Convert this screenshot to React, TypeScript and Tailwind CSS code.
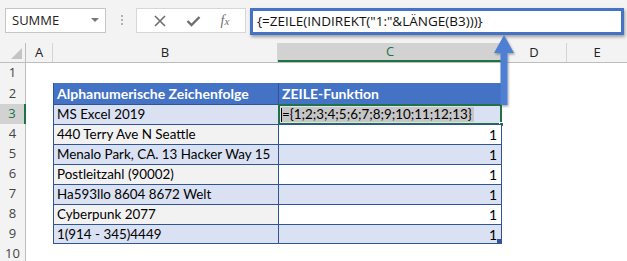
import React from "react";

const rows = [
  { b: "MS Excel 2019", c: "", odd: true },
  { b: "440 Terry Ave N Seattle", c: "1", odd: false },
  { b: "Menalo Park, CA. 13 Hacker Way 15", c: "1", odd: true },
  { b: "Postleitzahl (90002)", c: "1", odd: false },
  { b: "Ha593llo 8604 8672 Welt", c: "1", odd: true },
  { b: "Cyberpunk 2077", c: "1", odd: false },
  { b: "1(914 - 345)4449", c: "1", odd: true },
];

const ui = { fontFamily: '"Open Sans", "Noto Sans", sans-serif' };
const cell = { fontFamily: 'Lato, "Liberation Sans", sans-serif' };

function RowHead({ n, active }: { n: number; active?: boolean }) {
  return (
    <div
      className={
        "w-[26px] shrink-0 flex items-center justify-center text-[13px] " +
        (active ? "bg-[#d2d2d2] text-[#217346] border-r-2 border-[#217346]" : "bg-[#f3f3f3] text-[#444] border-r border-[#bdbdbd]")
      }
      style={ui}
    >
      {n}
    </div>
  );
}

export default function App() {
  return (
    <div className="relative w-[627px] h-[261px] overflow-hidden bg-white">
      {/* toolbar */}
      <div className="h-[43px] bg-[#f3f3f3] flex items-start pt-[8px]" style={ui}>
        <div className="ml-[5px] w-[101px] h-[25px] bg-white border border-[#c6c6c6] flex items-center justify-between pl-[6px] pr-[6px]">
          <span className="text-[13px] text-[#222]">SUMME</span>
          <span className="w-0 h-0 border-l-[4px] border-r-[4px] border-t-[4px] border-l-transparent border-r-transparent border-t-[#777] mb-[2px]" />
        </div>
        <div className="ml-[15px] mt-[7px] flex flex-col gap-[2px]">
          <span className="w-[2px] h-[2px] bg-[#b0b0b0]" />
          <span className="w-[2px] h-[2px] bg-[#b0b0b0]" />
          <span className="w-[2px] h-[2px] bg-[#b0b0b0]" />
        </div>
        <div className="ml-[13px] w-[110px] h-[25px] bg-white border border-[#d6d6d6] flex items-center justify-around px-[6px]">
          <svg width="14" height="14" viewBox="0 0 14 14">
            <path d="M2 2 L12 12 M12 2 L2 12" stroke="#6f6f6f" strokeWidth="1.6" />
          </svg>
          <svg width="15" height="14" viewBox="0 0 15 14">
            <path d="M1.5 7 L5.5 11 L13.5 3" stroke="#6f6f6f" strokeWidth="2.4" fill="none" />
          </svg>
          <span className="text-[14px] italic text-[#6f6f6f] leading-none" style={{ fontFamily: '"Liberation Serif", serif' }}>
            f<span className="text-[11px]">x</span>
          </span>
        </div>
        <div className="ml-[4px] w-[374px] h-[27px] bg-white border-[3px] border-[#4472c4] shadow-[1px_2px_3px_rgba(0,0,0,0.35)] flex items-center pl-[4px]">
          <span className="text-[13.5px] text-[#111] whitespace-nowrap">{'{=ZEILE(INDIREKT("1:"&LÄNGE(B3)))}'}</span>
        </div>
      </div>

      {/* column headers */}
      <div className="h-[20px] flex bg-[#f3f3f3] border-b border-[#bdbdbd] text-[13px] text-[#222]" style={ui}>
        <div className="w-[26px] shrink-0 border-r border-[#bdbdbd] relative">
          <span className="absolute right-[3px] bottom-[3px] w-0 h-0" style={{ borderBottom: "11px solid #c4c4c4", borderLeft: "11px solid transparent" }} />
        </div>
        <div className="w-[27px] shrink-0 border-r border-[#d4d4d4] flex items-center justify-center">A</div>
        <div className="w-[225px] shrink-0 border-r border-[#d4d4d4] flex items-center justify-center">B</div>
        <div className="w-[224px] shrink-0 bg-[#d2d2d2] border-b-2 border-[#217346] text-[#217346] flex items-center justify-center">C</div>
        <div className="w-[65px] shrink-0 border-r border-[#d4d4d4] flex items-center justify-center">D</div>
        <div className="flex-1 flex items-center justify-center">E</div>
      </div>

      {/* row 1 */}
      <div className="h-[20px] flex">
        <RowHead n={1} />
      </div>

      {/* row 2 header */}
      <div className="h-[21px] flex text-[14px]" style={cell}>
        <RowHead n={2} />
        <div className="w-[27px] shrink-0" />
        <div className="w-[225px] shrink-0 bg-[#4472c4] text-white font-bold flex items-center pl-[3px] border-l border-[#2f5597] whitespace-nowrap">
          Alphanumerische Zeichenfolge
        </div>
        <div className="w-[224px] shrink-0 bg-[#4472c4] text-white font-bold flex items-center pl-[3px] border-l border-r border-[#2f5597] whitespace-nowrap">
          ZEILE-Funktion
        </div>
      </div>

      {rows.map((r, i) => (
        <div key={i} className="h-[20px] flex text-[13.4px] text-black" style={cell}>
          <RowHead n={i + 3} active={i === 0} />
          <div className="w-[27px] shrink-0" />
          <div
            className={
              "w-[225px] shrink-0 flex items-center pl-[3px] border-l border-t border-[#2f5597] whitespace-nowrap overflow-hidden " +
              (r.odd ? "bg-[#d9e1f2]" : "bg-[#f2f2f2]") +
              (i === rows.length - 1 ? " border-b" : "")
            }
          >
            {r.b}
          </div>
          <div
            className={
              "relative w-[224px] shrink-0 flex items-center justify-end pr-[4px] text-[14px] border-l border-r border-t border-[#2f5597] " +
              (r.odd ? "bg-[#d9e1f2]" : "bg-white") +
              (i === rows.length - 1 ? " border-b" : "")
            }
          >
            {i === 0 ? (
              <>
                <div className="absolute -left-[1px] -top-[1px] -right-[1px] -bottom-[1px] border-2 border-[#217346]" />
                <div className="absolute left-[2px] top-[2px] h-[15px] flex items-center bg-[#c6c6c6] pr-[2px] text-[13.4px]">
                  <span className="w-[1px] h-[14px] bg-black" />
                  <span className="whitespace-nowrap leading-none">{"={1;2;3;4;5;6;7;8;9;10;11;12;13}"}</span>
                </div>
                <div className="absolute -right-[3px] -bottom-[3px] w-[5px] h-[5px] bg-[#217346] border border-white" />
              </>
            ) : (
              r.c
            )}
            {i === rows.length - 1 && <div className="absolute right-0 bottom-0 w-[4px] h-[4px] bg-[#2f5597]" />}
          </div>
        </div>
      ))}

      <div className="h-[20px] flex">
        <RowHead n={10} />
      </div>

      {/* arrow */}
      <svg className="absolute left-[490px] top-[33px]" width="28" height="78" viewBox="0 0 28 78">
        <defs>
          <filter id="sh" x="-50%" y="-50%" width="200%" height="200%">
            <feDropShadow dx="1" dy="1.5" stdDeviation="1.2" floodColor="#000" floodOpacity="0.35" />
          </filter>
        </defs>
        <polygon points="14,2 24,20 17.5,20 17.5,72 10.5,72 10.5,20 4,20" fill="#4f7fd3" filter="url(#sh)" />
      </svg>
    </div>
  );
}
